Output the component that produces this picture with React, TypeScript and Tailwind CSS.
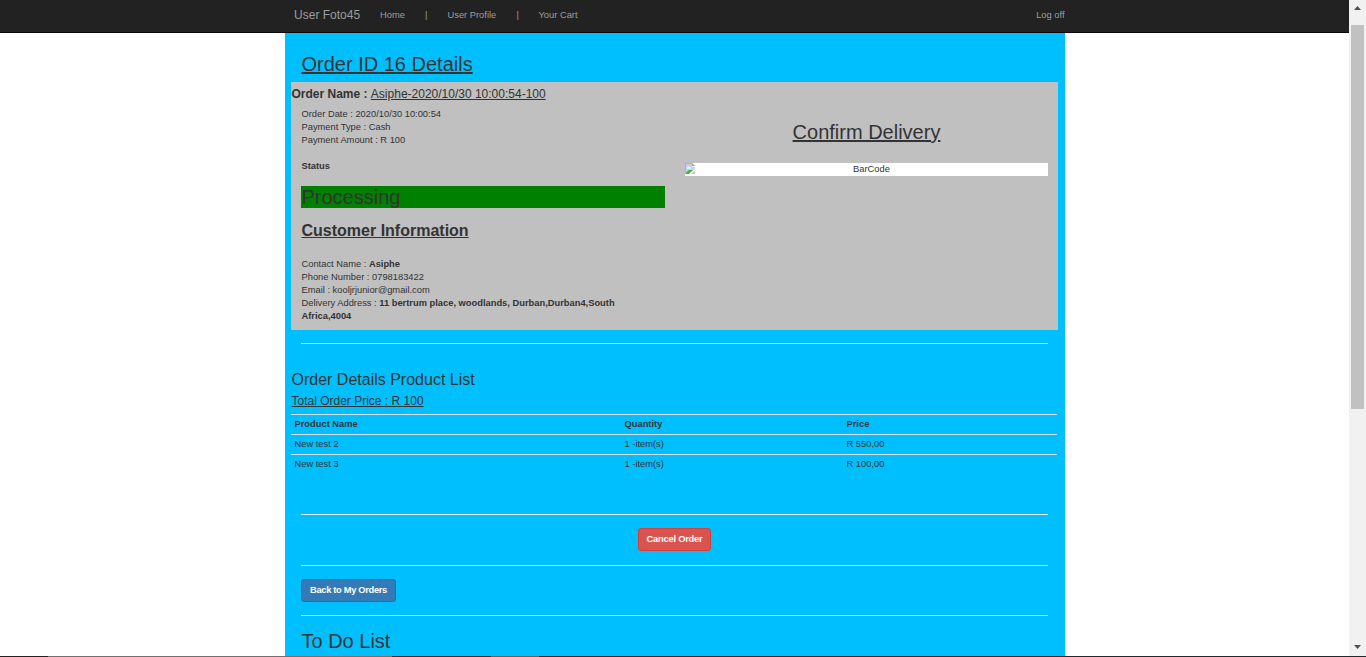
const products = [
  { name: 'New test 2', quantity: '1 -item(s)', price: 'R 550,00' },
  { name: 'New test 3', quantity: '1 -item(s)', price: 'R 100,00' },
];

function Navbar() {
  return (
    <header className="h-[33px] border-b border-[#080808] bg-[#222] text-[#9d9d9d]">
      <nav className="mx-auto flex h-[30px] w-[780px] items-center pl-[9.6px] leading-[14px]">
        <span className="w-[86px] text-[12px]">User Foto45</span>
        <span className="w-[45px]">Home</span>
        <span className="w-[22.4px]">|</span>
        <span className="w-[69px]">User Profile</span>
        <span className="w-[22px]">|</span>
        <span>Your Cart</span>
        <span className="ml-auto">Log off</span>
      </nav>
    </header>
  );
}

function BrokenImage() {
  return (
    <svg width="11" height="12" viewBox="0 0 11 12">
      <path d="M0 0h7l3 3v8H0z" fill="#f4f6fb" />
      <path d="M1 1h6v3h3v2L5 9H1z" fill="#c2d3f2" />
      <path d="M0 .5h7M.5 0v11" stroke="#b0b0b8" fill="none" />
      <path d="M7 0v3h3z" fill="#9a9aa4" />
      <path d="M2 4.5h1l1-1 1 1h1v1H2z" fill="#fff" />
      <path d="M1 11V9.500l3-2.500h4L4 11z" fill="#4caf3a" />
      <path d="M4 11l6-5v1L5.500 11z" fill="#fff" />
      <path d="M6 11l4-3v3z" fill="#b8c6c0" />
    </svg>
  );
}

function OrderCard() {
  return (
    <section className="ml-[6px] mt-[7px] h-[248px] w-[767px] bg-[#c0c0c0] pt-[5px]">
      <h2 className="h-[14px] pl-[0.5px] text-[12px] leading-[14px]">
        <b>Order Name : </b>
        <span className="underline">Asiphe-2020/10/30 10:00:54-100</span>
      </h2>
      <div className="flex">
        <div className="ml-[10px] mt-[7px] w-[364px]">
          <div className="pl-[0.5px]">
            <p>Order Date : 2020/10/30 10:00:54</p>
            <p>Payment Type : Cash</p>
            <p>Payment Amount : R 100</p>
            <p className="mt-[13px] font-bold">Status</p>
          </div>
          <div className="mt-[13px] h-[22px] bg-[#008000] pl-[0.5px] text-[20px] leading-[22px]">Processing</div>
          <div className="pl-[0.5px]">
            <h3 className="mt-[14px] text-[16px] font-bold leading-[18px] underline">Customer Information</h3>
            <div className="mt-[18px] w-[340px]">
              <p>Contact Name : <b>Asiphe</b></p>
              <p>Phone Number : 0798183422</p>
              <p>Email : kooljrjunior@gmail.com</p>
              <p>Delivery Address : <b>11 bertrum place, woodlands, Durban,Durban4,South</b></p>
              <p><b>Africa,4004</b></p>
            </div>
          </div>
        </div>
        <div className="ml-[20px] mt-[20px] w-[363px]">
          <h2 className="text-center text-[20px] leading-[22px] underline">Confirm Delivery</h2>
          <div className="mt-[20px] flex h-[13px] bg-white">
            <BrokenImage />
            <span className="flex-1 pr-px text-center">BarCode</span>
          </div>
        </div>
      </div>
    </section>
  );
}

function Rule({ className }: { className: string }) {
  return <hr className={`ml-[16px] w-[747px] border-t border-[#eee] ${className}`} />;
}

function Scrollbar() {
  return (
    <aside className="flex h-[656px] w-[17px] flex-col items-center bg-[#f1f1f1]">
      <svg className="mt-[6px]" width="7" height="4" viewBox="0 0 7 4"><path d="M0 4L3.5 0 7 4z" fill="#505050" /></svg>
      <div className="ml-[-1px] mt-[15px] h-[384px] w-[13px] bg-[#c1c1c1]" />
      <svg className="mb-[7px] mt-auto" width="7" height="4" viewBox="0 0 7 4"><path d="M0 0h7L3.5 4z" fill="#505050" /></svg>
    </aside>
  );
}

export default function App() {
  return (
    <div className="h-[657px] w-[1366px] overflow-hidden bg-white font-['Liberation_Sans',Arial,sans-serif] text-[9.33px] leading-[13px] text-[#333]">
      <div className="flex h-[656px]">
        <div className="w-[1349px] overflow-hidden">
          <Navbar />
          <main className="ml-[285px] h-[623px] w-[780px] bg-[#00bfff] pt-[20px]">
            <h1 className="ml-[16.5px] text-[20px] leading-[22px] underline">Order ID 16 Details</h1>
            <OrderCard />
            <Rule className="mt-[13px]" />
            <h2 className="ml-[6.5px] mt-[27px] text-[16px] leading-[18px]">Order Details Product List</h2>
            <h3 className="ml-[6.5px] mt-[5px] text-[12px] leading-[14px] underline">Total Order Price : R 100</h3>
            <table className="ml-[6px] mt-[6px] w-[766px] table-fixed border-collapse text-left">
              <colgroup>
                <col className="w-[330px]" />
                <col className="w-[222px]" />
                <col className="w-[214px]" />
              </colgroup>
              <thead>
                <tr className="h-[20px] border-t border-[#ddd]">
                  <th className="px-[3.5px] py-0">Product Name</th>
                  <th className="px-[3.5px] py-0">Quantity</th>
                  <th className="px-[3.5px] py-0">Price</th>
                </tr>
              </thead>
              <tbody>
                {products.map((p) => (
                  <tr key={p.name} className="h-[20px] border-t border-[#ddd]">
                    <td className="px-[3.5px] py-0">{p.name}</td>
                    <td className="px-[3.5px] py-0">{p.quantity}</td>
                    <td className="px-[3.5px] py-0">{p.price}</td>
                  </tr>
                ))}
              </tbody>
            </table>
            <Rule className="mt-[39px]" />
            <div className="mt-[13px] flex pl-[353px]">
              <button className="h-[23px] w-[73px] whitespace-nowrap rounded-[3px] border border-[#d43f3a] bg-[#d9534f] font-bold tracking-[-0.22px] text-white">Cancel Order</button>
            </div>
            <Rule className="mt-[14px]" />
            <div className="mt-[13px] flex pl-[16px]">
              <button className="h-[23px] w-[95px] whitespace-nowrap rounded-[3px] border border-[#2e6da4] bg-[#337ab7] font-bold tracking-[-0.32px] text-white">Back to My Orders</button>
            </div>
            <Rule className="mt-[13px]" />
            <h2 className="ml-[16.5px] mt-[14px] text-[20px] leading-[22px]">To Do List</h2>
          </main>
        </div>
        <Scrollbar />
      </div>
      <footer className="flex h-px bg-[#1d2b30]">
        <div className="w-[48px] bg-[#222]" />
        <div className="w-[344px] bg-[#707070]" />
        <div className="w-[99px] bg-[#1b3038]" />
        <div className="w-[48px] bg-[#55666b]" />
      </footer>
    </div>
  );
}
